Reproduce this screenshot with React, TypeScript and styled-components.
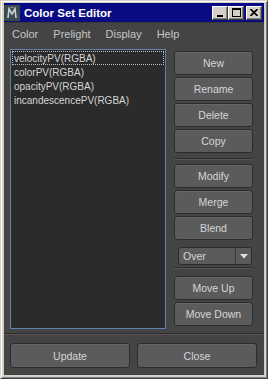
import React from 'react';
import styled, { createGlobalStyle } from 'styled-components';

const GlobalStyle = createGlobalStyle`
  html, body {
    margin: 0;
    padding: 0;
    background: #ffffff;
  }
  * {
    box-sizing: border-box;
  }
`;

const Window = styled.div`
  width: 268px;
  height: 379px;
  display: flex;
  flex-direction: column;
  background: #d4d0c8;
  border-top: 1px solid #d4d0c8;
  border-left: 1px solid #d4d0c8;
  border-right: 1px solid #404040;
  border-bottom: 1px solid #404040;
  box-shadow: inset 1px 1px 0 #ffffff, inset -1px -1px 0 #808080;
  padding: 2px 3px 3px 3px;
  font-family: 'Liberation Sans', Arial, sans-serif;
`;

const TitleBar = styled.div`
  height: 19px;
  flex: none;
  display: flex;
  align-items: center;
  background: #0a0a82;
  padding: 0 2px 0 0;
`;

const TitleText = styled.span`
  color: #ffffff;
  font-weight: bold;
  font-size: 11.5px;
  margin-left: 4px;
  flex: 1;
`;

const CaptionButton = styled.div<{ $gap?: number }>`
  width: 16px;
  height: 14px;
  margin-left: ${({ $gap }) => $gap ?? 0}px;
  background: #d4d0c8;
  border-top: 1px solid #ffffff;
  border-left: 1px solid #ffffff;
  border-right: 1px solid #404040;
  border-bottom: 1px solid #404040;
  box-shadow: inset -1px -1px 0 #808080;
  display: flex;
  align-items: center;
  justify-content: center;
`;

const Client = styled.div`
  flex: 1;
  display: flex;
  flex-direction: column;
  background: #444444;
  min-height: 0;
`;

const MenuBar = styled.div`
  height: 23px;
  flex: none;
  display: flex;
  align-items: center;
  gap: 15px;
  padding: 0 8px;
  border-top: 1px solid #3a3a3a;
`;

const MenuItem = styled.span`
  color: #c6c6c6;
  font-size: 11px;
`;

const Main = styled.div`
  display: flex;
  padding: 4px 0 0 6px;
  gap: 8px;
`;

const ListBox = styled.div`
  width: 156px;
  height: 280px;
  background: #2b2b2b;
  border: 1px solid #5f82ab;
  padding: 1px 1px;
`;

const ListRow = styled.div<{ $focused?: boolean }>`
  height: 14px;
  line-height: 13px;
  padding-left: 1px;
  font-size: 10px;
  color: #d4d4d4;
  white-space: nowrap;
  border: 1px dotted ${({ $focused }) => ($focused ? '#bdbdbd' : 'transparent')};
`;

const Column = styled.div`
  width: 79px;
  display: flex;
  flex-direction: column;
  padding-top: 2px;
`;

const Button = styled.button<{ $height?: number; $mt?: number }>`
  height: ${({ $height }) => $height ?? 24}px;
  margin-top: ${({ $mt }) => $mt ?? 0}px;
  background: #5b5b5b;
  border: 1px solid #2c2c2c;
  border-radius: 3px;
  box-shadow: inset 0 1px 0 #666666;
  color: #d6d6d6;
  font-family: 'Liberation Sans', Arial, sans-serif;
  font-size: 10.5px;
  padding: 0;
  cursor: pointer;
`;

const Groove = styled.div<{ $mt: number; $mb: number }>`
  height: 2px;
  margin: ${({ $mt, $mb }) => `${$mt}px 0 ${$mb}px 0`};
  border-top: 1px solid #2e2e2e;
  border-bottom: 1px solid #555555;
`;

const Select = styled.div`
  height: 18px;
  margin: 7px 1px 0 4px;
  display: flex;
  background: #5b5b5b;
  border: 1px solid #2c2c2c;
  border-radius: 3px;
  color: #d6d6d6;
  font-size: 10.5px;
`;

const SelectValue = styled.div`
  flex: 1;
  display: flex;
  align-items: center;
  padding-left: 4px;
  border-right: 1px solid #3a3a3a;
`;

const SelectArrow = styled.div`
  width: 15px;
  display: flex;
  align-items: center;
  justify-content: center;
`;

const FooterSep = styled.div`
  height: 2px;
  margin-top: 4px;
  border-top: 1px solid #2e2e2e;
  border-bottom: 1px solid #555555;
`;

const Footer = styled.div`
  display: flex;
  gap: 7px;
  padding: 8px 7px 0 6px;
`;

const FooterButton = styled(Button)`
  flex: 1;
  height: 25px;
`;

const items = ['velocityPV(RGBA)', 'colorPV(RGBA)', 'opacityPV(RGBA)', 'incandescencePV(RGBA)'];

const MayaIcon = () => (
  <svg width="16" height="16" viewBox="0 0 16 16">
    <rect x="0" y="0" width="16" height="16" fill="#3c4a52" />
    <path d="M4 13 L5 4 L8 9 L11 4 L12 13" stroke="#c8d0d4" strokeWidth="1.6" fill="none" />
    <path d="M6 3 Q8 1 10 3" stroke="#8a989e" strokeWidth="1" fill="none" />
  </svg>
);

export default function App() {
  return (
    <>
      <GlobalStyle />
      <Window>
        <TitleBar>
          <MayaIcon />
          <TitleText>Color Set Editor</TitleText>
          <CaptionButton>
            <svg width="8" height="8" viewBox="0 0 8 8">
              <rect x="1" y="6" width="6" height="2" fill="#000" />
            </svg>
          </CaptionButton>
          <CaptionButton>
            <svg width="9" height="9" viewBox="0 0 9 9">
              <rect x="0.5" y="0.5" width="8" height="8" fill="none" stroke="#000" />
              <rect x="0" y="0" width="9" height="2" fill="#000" />
            </svg>
          </CaptionButton>
          <CaptionButton $gap={2}>
            <svg width="8" height="7" viewBox="0 0 8 7">
              <path d="M0.5 0 L7.5 7 M7.5 0 L0.5 7" stroke="#000" strokeWidth="1.6" />
            </svg>
          </CaptionButton>
        </TitleBar>
        <Client>
          <MenuBar>
            <MenuItem>Color</MenuItem>
            <MenuItem>Prelight</MenuItem>
            <MenuItem>Display</MenuItem>
            <MenuItem>Help</MenuItem>
          </MenuBar>
          <Main>
            <ListBox>
              {items.map((name, i) => (
                <ListRow key={name} $focused={i === 0}>
                  {name}
                </ListRow>
              ))}
            </ListBox>
            <Column>
              <Button>New</Button>
              <Button $mt={2}>Rename</Button>
              <Button $mt={2}>Delete</Button>
              <Button $mt={2}>Copy</Button>
              <Groove $mt={5} $mb={4} />
              <Button>Modify</Button>
              <Button $mt={2}>Merge</Button>
              <Button $mt={2}>Blend</Button>
              <Select>
                <SelectValue>Over</SelectValue>
                <SelectArrow>
                  <svg width="8" height="5" viewBox="0 0 8 5">
                    <path d="M0 0 L8 0 L4 4.5 Z" fill="#e0e0e0" />
                  </svg>
                </SelectArrow>
              </Select>
              <Groove $mt={2} $mb={7} />
              <Button>Move Up</Button>
              <Button $mt={2}>Move Down</Button>
            </Column>
          </Main>
          <FooterSep />
          <Footer>
            <FooterButton>Update</FooterButton>
            <FooterButton>Close</FooterButton>
          </Footer>
        </Client>
      </Window>
    </>
  );
}
